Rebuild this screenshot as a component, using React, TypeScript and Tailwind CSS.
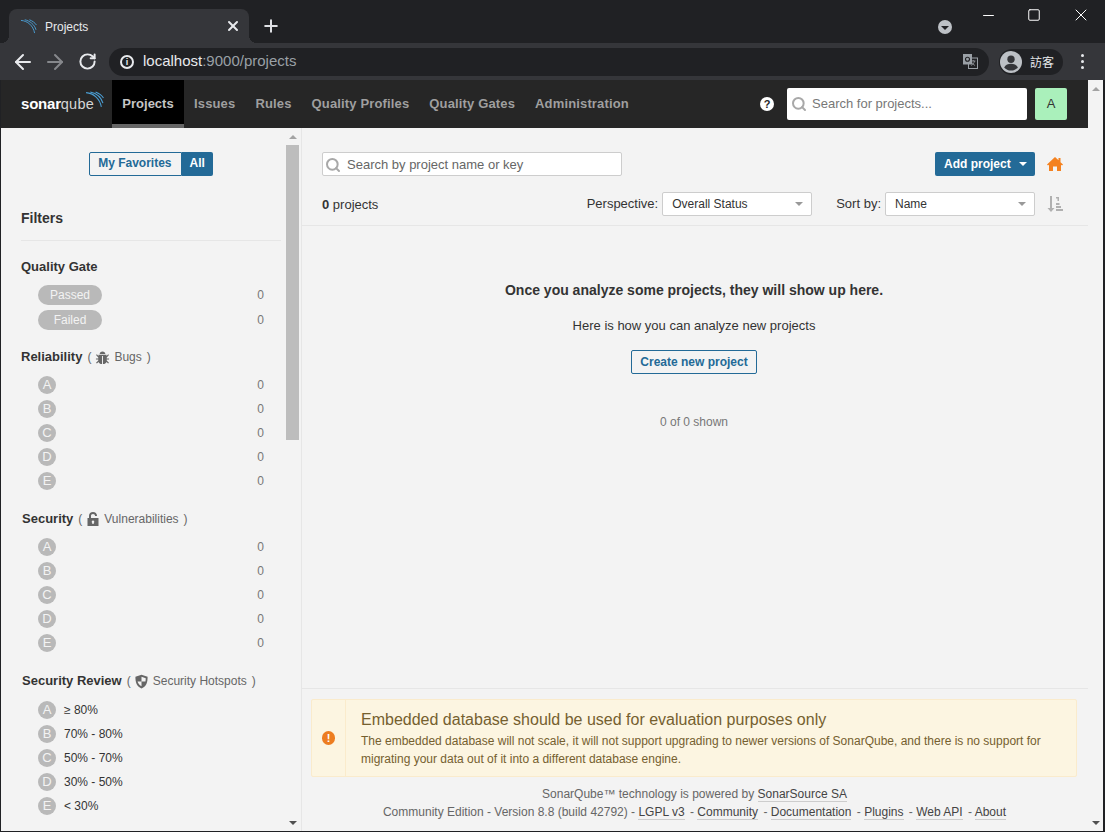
import React from "react";
import { ArrowLeft, ArrowRight, RotateCw, Plus, X, Minus, Square, Search } from "lucide-react";

const navItems = ["Issues", "Rules", "Quality Profiles", "Quality Gates", "Administration"];
const footerLinks = ["LGPL v3", "Community", "Documentation", "Plugins", "Web API"];
const ratings = ["A", "B", "C", "D", "E"];
const hotspots = ["≥ 80%", "70% - 80%", "50% - 70%", "30% - 50%", "< 30%"];

const Arcs = ({ className, color }: { className: string; color: string }) => (
  <svg viewBox="0 0 18 16" className={className} fill="none" stroke={color} strokeWidth="1">
    <path d="M1 1.500C8 2 14 7 15.500 15" />
    <path d="M5 .8C10.500 2 15.500 6 17 11.500" />
    <path d="M10 .8C13 2 16 4 17.500 6.500" />
  </svg>
);

const Bug = () => (
  <svg viewBox="0 0 16 16" className="w-[15px] h-[15px] ml-[4px] mr-[4px]" fill="#666">
    <path d="M5 4.200C5 2.600 6.300 1.500 8 1.500s3 1.100 3 2.700zM3.800 5h8.400l.2 1.400 1.600-1.800.9.8-2.400 2.600V9h2.500v1.200h-2.500v1l2.400 2.500-.9.8-1.700-1.800C11.700 14 10.500 15 8.500 15V6.500h-1V15c-2 0-3.200-1-3.800-2.300L2 14.500l-.9-.8 2.400-2.500v-1H1V9h2.500v-.9L1.100 5.400l.9-.8 1.600 1.800z" />
  </svg>
);

const Lock = () => (
  <svg viewBox="2 0 12 16" className="w-[12px] h-[16px] ml-[5px] mr-[5px]" fill="#666">
    <path fillRule="evenodd" d="M2.500 7H4V4.800C4 2.500 5.700 1 8 1s4 1.500 4 3.800V5h-2v-.2C10 3.700 9.200 3 8 3s-2 .7-2 1.800V7h7.500v8h-11zM8 9.500a1.300 1.300 0 0 0-.7 2.400V13h1.400v-1.100A1.300 1.300 0 0 0 8 9.500z" />
  </svg>
);

const Shield = () => (
  <svg viewBox="0 0 16 16" className="w-[15px] h-[15px] ml-[3px] mr-[4px]">
    <path fill="#666" d="M8 .8 14.500 3c0 6-1 10-6.500 12.500C2.500 13 1.500 9 1.500 3z" />
    <path fill="#f3f3f3" d="M8 3 12.500 4.500C12.500 6 12.400 7 12.200 8H8zM8 8v5C5.500 11.700 4.300 10 3.800 8z" />
  </svg>
);

const Translate = () => (
  <svg viewBox="0 0 15 15" className="w-[15px] h-[15px]">
    <rect x="5.500" y="4" width="9" height="10.500" fill="#202124" stroke="#9aa0a6" />
    <path d="M8 7h4.500M10.200 6v1M11.500 7c-.4 2-1.500 3.500-3.200 4.500M9 8.500c.6 1.300 1.600 2.300 3 3" fill="none" stroke="#9aa0a6" strokeWidth=".8" />
    <rect x="0" y="0" width="9" height="10.500" fill="#9aa0a6" />
    <circle cx="4.500" cy="5.200" r="2" fill="none" stroke="#202124" strokeWidth="1.100" />
  </svg>
);

const Caret = ({ className }: { className: string }) => (
  <span className={`w-0 h-0 border-x-[4px] border-x-transparent border-t-[4px] ${className}`} />
);

const Grade = ({ label }: { label: string }) => (
  <span className="w-[18px] h-[18px] rounded-full bg-[#b9b9b9] text-[#f3f3f3] text-[13px] leading-[18px] text-center shrink-0">
    {label}
  </span>
);

const FilterRow = ({ children, count, h = "h-6" }: { children: React.ReactNode; count?: string; h?: string }) => (
  <div className={`${h} flex items-center pl-[17px] pr-[17px] justify-between`}>
    <div className="flex items-center gap-2 text-[#333]">{children}</div>
    {count && <span className="text-[#777]">{count}</span>}
  </div>
);

const FilterTitle = ({ title, icon, sub, indent }: { title: string; icon?: React.ReactNode; sub?: string; indent?: boolean }) => (
  <div className={`h-6 flex items-center text-[#666] ${indent ? "pl-[1px]" : ""}`}>
    <span className="text-[13px] font-semibold text-[#333]">{title}</span>
    {sub && (
      <span className="flex items-center ml-[5px]">
        <span>(</span>
        {icon}
        <span>{sub}</span>
        <span className="ml-[5px]">)</span>
      </span>
    )}
  </div>
);

const RatingGroup = ({ title, icon, sub, indent, mb }: { title: string; icon: React.ReactNode; sub: string; indent?: boolean; mb: string }) => (
  <div className={mb}>
    <FilterTitle title={title} icon={icon} sub={sub} indent={indent} />
    <div className="mt-[4px]">
      {ratings.map((r) => (
        <FilterRow key={r} count="0">
          <Grade label={r} />
        </FilterRow>
      ))}
    </div>
  </div>
);

const SelectBox = ({ label }: { label: string }) => (
  <div className="w-[150px] h-6 bg-white border border-[#cdcdcd] rounded-[2px] flex items-center justify-between pl-[9px] pr-[8px] text-[12px] text-[#333]">
    <span>{label}</span>
    <Caret className="border-t-[#999]" />
  </div>
);

const ScrollTrack = ({ thumb, className = "" }: { thumb?: boolean; className?: string }) => (
  <div className={`shrink-0 flex flex-col items-center justify-between bg-[#f3f3f3] ${className}`}>
    <div className="w-full">
      <div className="h-[17px] flex items-center justify-center">
        <span className="w-0 h-0 border-x-[4px] border-x-transparent border-b-[4px] border-b-[#a3a3a3]" />
      </div>
      {thumb && <div className="h-[295px] bg-[#bdbdbd]" />}
    </div>
    <div className="h-[17px] flex items-center justify-center">
      <Caret className="border-t-[#505050]" />
    </div>
  </div>
);

export default function App() {
  return (
    <div className="w-[1105px] h-[832px] overflow-hidden flex flex-col bg-[#202124] text-[12px] font-['Liberation_Sans',Arial,sans-serif]">
      {/* browser tabs */}
      <div className="h-[43px] shrink-0 flex items-end pl-[9px] relative">
        <span className="absolute left-[1px] bottom-0 w-2 h-2 bg-[radial-gradient(circle_at_0_0,transparent_8px,#35363a_8px)]" />
        <div className="w-[240px] h-[34px] bg-[#35363a] rounded-t-[8px] flex items-center pl-[11px] pr-[8px] text-white">
          <Arcs className="w-[17px] h-[15px]" color="#4b9fd5" />
          <span className="ml-[8px] flex-1 text-[12px] text-[#e8eaed] pt-[1px]">Projects</span>
          <X size={16} color="#e8eaed" strokeWidth={3} />
        </div>
        <span className="w-2 h-2 bg-[radial-gradient(circle_at_100%_0,transparent_8px,#35363a_8px)]" />
        <Plus size={20} color="#dfe1e5" strokeWidth={2.400} className="ml-[4px] mb-[7px]" />
        <div className="flex-1" />
        <div className="w-[14px] h-[14px] rounded-full bg-[#bdc1c6] flex items-center justify-center mr-[153px] mb-[9px]">
          <Caret className="border-t-[#202124] mt-[1px]" />
        </div>
        <div className="absolute right-[14px] top-[5px] flex items-center gap-[30px] text-white">
          <Minus size={17} strokeWidth={1.400} />
          <Square size={14} strokeWidth={1.700} />
          <X size={20} strokeWidth={1.200} />
        </div>
      </div>
      {/* browser toolbar */}
      <div className="h-[37px] shrink-0 bg-[#35363a] flex items-center pl-[11px] pr-[21px]">
        <ArrowLeft size={24} color="#e8eaed" strokeWidth={2} />
        <ArrowRight size={24} color="#86888c" strokeWidth={2} className="ml-[8px]" />
        <RotateCw size={19} color="#e8eaed" strokeWidth={2.500} className="ml-[10.500px]" />
        <div className="ml-[12.500px] w-[880px] h-7 rounded-full bg-[#202124] flex items-center pl-[11px] pr-[11px]">
          <span className="w-[14px] h-[14px] rounded-full border-2 border-[#e8eaed] text-[#e8eaed] text-[9px] font-bold leading-[10px] text-center">i</span>
          <span className="ml-[9px] text-[15px] text-[#e8eaed]">localhost</span>
          <span className="text-[15px] text-[#9aa0a6]">:9000/projects</span>
          <span className="flex-1" />
          <Translate />
        </div>
        <div className="ml-[10px] w-[64px] h-[26px] rounded-full bg-[#202124] flex items-center pl-[1px] gap-[8px]">
          <svg viewBox="0 0 24 24" className="w-[22px] h-[22px]">
            <circle cx="12" cy="12" r="12" fill="#bdc1c6" />
            <circle cx="12" cy="9" r="4" fill="#35363a" />
            <path d="M4.500 18c1.500-3 4.500-4 7.500-4s6 1 7.500 4a10 10 0 0 1-15 0z" fill="#35363a" />
          </svg>
          <span className="text-[12px] text-[#e8eaed] font-['Noto_Sans_CJK_TC',sans-serif]">訪客</span>
        </div>
        <div className="ml-auto flex flex-col gap-[3px]">
          <span className="w-[3px] h-[3px] rounded-full bg-[#e8eaed]" />
          <span className="w-[3px] h-[3px] rounded-full bg-[#e8eaed]" />
          <span className="w-[3px] h-[3px] rounded-full bg-[#e8eaed]" />
        </div>
      </div>
      {/* page */}
      <div className="flex-1 min-h-0 flex ml-[1px] mr-[2px] mb-[1px] bg-[#f3f3f3]">
        <div className="w-[1087px] shrink-0 flex flex-col min-w-0">
          {/* sonar nav */}
          <div className="h-12 shrink-0 bg-[#262626] flex items-center text-[13px] font-semibold text-[#9f9f9f] pr-[20px]">
            <div className="w-[111px] flex items-baseline pl-[20px] relative">
              <span className="text-[15px] font-bold tracking-[-0.2px] text-white">sonar</span>
              <span className="text-[14.500px] font-normal tracking-[0.2px] text-[#d5d5d5]">qube</span>
              <Arcs className="absolute left-[84px] top-[-2px] w-[19px] h-[17px]" color="#4b9fd5" />
            </div>
            <div className="h-12 w-[72px] bg-black border-b-[4px] border-[#666] flex items-center justify-center text-[#c5c5c5] pt-[4px] mr-[10px]">
              Projects
            </div>
            <div className="flex gap-[20px] tracking-[0.15px]">
              {navItems.map((item) => (
                <span key={item}>{item}</span>
              ))}
            </div>
            <div className="flex-1" />
            <div className="w-[14px] h-[14px] rounded-full bg-white text-[#262626] text-[11px] font-bold leading-[14px] text-center">?</div>
            <div className="ml-[13px] w-[240px] h-8 bg-white rounded-[2px] flex items-center pl-[4px] text-[#777] font-normal">
              <Search size={16} color="#a8a8a8" strokeWidth={3} />
              <span className="ml-[5px] text-[13px]">Search for projects...</span>
            </div>
            <div className="ml-[8px] mr-[1px] w-8 h-8 bg-[#aaf0bb] rounded-[2px] flex items-center justify-center text-[#333] text-[13px] font-normal">A</div>
          </div>
          <div className="flex-1 min-h-0 flex">
            {/* sidebar */}
            <div className="w-[301px] shrink-0 flex border-r border-[#e6e6e6]">
              <div className="flex-1 min-w-0 overflow-hidden pl-[20px] pr-[5px] pt-[24px]">
                <div className="flex justify-center h-6 font-semibold">
                  <div className="h-6 pl-2 pr-[9px] border border-[#236a97] rounded-l-[2px] text-[#236a97] leading-[21px]">My Favorites</div>
                  <div className="h-6 px-2 bg-[#236a97] rounded-r-[2px] text-white leading-[23px]">All</div>
                </div>
                <div className="mt-[34px] pb-[13px] border-b border-[#e6e6e6] text-[14px] font-semibold text-[#333] leading-[17px]">Filters</div>
                <div className="mt-[14px]">
                  <FilterTitle title="Quality Gate" />
                  <div className="mt-[3px] mb-[13px]">
                    {["Passed", "Failed"].map((s) => (
                      <FilterRow key={s} count="0" h="h-[25px]">
                        <span className="w-16 h-5 rounded-full bg-[#b9b9b9] text-[#f3f3f3] text-center leading-[20px]">{s}</span>
                      </FilterRow>
                    ))}
                  </div>
                  <RatingGroup title="Reliability" icon={<Bug />} sub="Bugs" mb="mb-[14px]" />
                  <RatingGroup title="Security" icon={<Lock />} sub="Vulnerabilities" indent mb="mb-[14px]" />
                  <FilterTitle title="Security Review" icon={<Shield />} sub="Security Hotspots" indent />
                  <div className="mt-[5px]">
                    {ratings.map((r, i) => (
                      <FilterRow key={r}>
                        <Grade label={r} />
                        <span>{hotspots[i]}</span>
                      </FilterRow>
                    ))}
                  </div>
                </div>
              </div>
              <ScrollTrack thumb className="w-[13px] mr-[2px]" />
            </div>
            {/* main */}
            <div className="flex-1 min-w-0 flex flex-col">
              <div className="h-[98px] shrink-0 border-b border-[#e6e6e6] pl-[20px] pr-[25px] pt-[24px]">
                <div className="flex items-center justify-between h-6">
                  <div className="w-[300px] h-6 bg-white border border-[#cdcdcd] rounded-[2px] flex items-center pl-[2px] pt-[1px] text-[#666]">
                    <Search size={16} color="#a8a8a8" strokeWidth={3} />
                    <span className="ml-[6px] text-[13px]">Search by project name or key</span>
                  </div>
                  <div className="flex items-center">
                    <div className="w-[100px] h-6 bg-[#236a97] rounded-[2px] flex items-center pl-[9px] text-white font-semibold">
                      Add project
                      <Caret className="border-t-white ml-[8px]" />
                    </div>
                    <svg viewBox="0 0 16 16" className="w-4 h-4 ml-[12px]" fill="#f4811f">
                      <path d="M8 1 11.500 4.300V2H13.500V6.200L16 8.500 15 9.500 14 8.700V15H10V10.500H6V15H2V8.700L1 9.500 0 8.500z" />
                    </svg>
                  </div>
                </div>
                <div className="flex items-center justify-between mt-[16px] h-6">
                  <span className="text-[13px] text-[#333] pt-[1px]"><b className="font-semibold">0</b> projects</span>
                  <div className="flex items-center text-[13px] text-[#333]">
                    <span className="mr-[4px] pb-[1px]">Perspective:</span>
                    <SelectBox label="Overall Status" />
                    <span className="ml-[24px] mr-[4px] pb-[1px]">Sort by:</span>
                    <SelectBox label="Name" />
                    <svg viewBox="0 0 16 16" className="w-4 h-4 ml-[12px]" fill="#b0b0b0">
                      <path d="M3 0h2v12h2.500L4 16 .5 12H3zM9 1h3v4h-1.500V2.500H9zM9 7h3.500v2H9zM9 10h5v2H9zM9 13h7v2H9z" />
                    </svg>
                  </div>
                </div>
              </div>
              <div className="flex-1 min-h-0 flex flex-col items-center pt-[55px] pr-[2px] text-[#333]">
                <div className="text-[14px] font-semibold leading-[18px]">Once you analyze some projects, they will show up here.</div>
                <div className="mt-[19px] text-[13px] leading-[16px]">Here is how you can analyze new projects</div>
                <div className="mt-[16px] h-6 w-[126px] border border-[#236a97] rounded-[2px] text-[#236a97] font-semibold leading-[22px] text-center">Create new project</div>
                <div className="mt-[39px] text-[#777]">0 of 0 shown</div>
              </div>
              <div className="h-[143px] shrink-0 border-t border-[#e6e6e6] pt-[10px] pl-[9px] pr-[10px] text-[#666]">
                <div className="h-[78px] w-[766px] bg-[#fcf5e1] border border-[#faebcc] rounded-[2px] flex text-[#75602f]">
                  <div className="w-[34px] shrink-0 border-r border-[#faebcc] flex items-center justify-center">
                    <span className="w-[13px] h-[14px] rounded-full bg-[#ed7d20] text-white text-[11px] font-bold leading-[14px] text-center">!</span>
                  </div>
                  <div className="pl-[15px] pt-[10px]">
                    <div className="text-[16px] leading-[20px]">Embedded database should be used for evaluation purposes only</div>
                    <div className="leading-[18px] mt-[2px]">
                      The embedded database will not scale, it will not support upgrading to newer versions of SonarQube, and there is no support for<br />
                      migrating your data out of it into a different database engine.
                    </div>
                  </div>
                </div>
                <div className="mt-[8px] text-center leading-[18px]">
                  <div>
                    SonarQube™ technology is powered by <span className="text-[#444] border-b border-[#cdcdcd]">SonarSource SA</span>
                  </div>
                  <div>
                    Community Edition - Version 8.8 (build 42792) -{" "}
                    {footerLinks.map((link) => (
                      <React.Fragment key={link}>
                        <span className="text-[#444] border-b border-[#cdcdcd] mr-[2px]">{link}</span> -{" "}
                      </React.Fragment>
                    ))}
                    <span className="text-[#444] border-b border-[#cdcdcd]">About</span>
                  </div>
                </div>
              </div>
            </div>
          </div>
        </div>
        <ScrollTrack className="flex-1" />
      </div>
    </div>
  );
}
